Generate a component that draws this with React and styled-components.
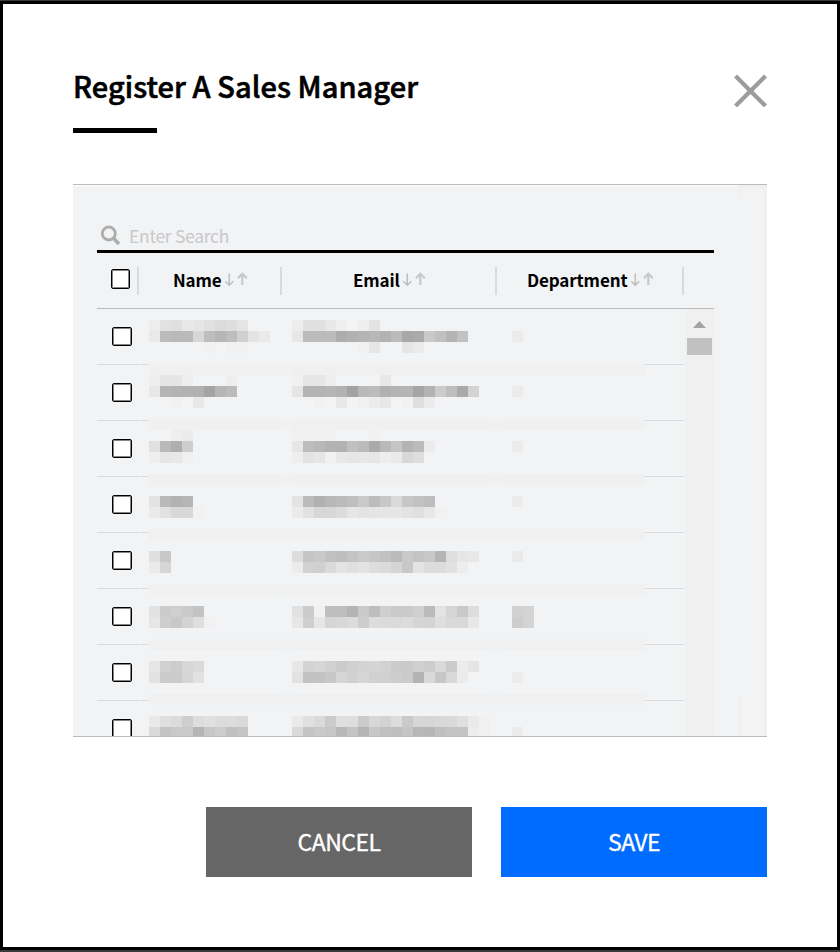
import React from 'react';
import styled, { createGlobalStyle } from 'styled-components';

const GlobalStyle = createGlobalStyle`
  *, *::before, *::after { box-sizing: border-box; }
  body {
    margin: 0;
    background: #fff;
    font-family: "Noto Sans CJK KR", "Noto Sans", sans-serif;
    color: #000;
  }
`;

const Frame = styled.div`
  width: 840px;
  height: 952px;
  border-top: 1px solid #3a3a3a;
  border-bottom: 2px solid #3a3a3a;
`;

const Dialog = styled.main`
  height: 949px;
  border: 3px solid #000;
  background: #fff;
  padding: 70px 70px 0;
  display: flex;
  flex-direction: column;
`;

const Header = styled.header`
  display: flex;
  justify-content: space-between;
  align-items: flex-start;
  height: 54px;
`;

const Title = styled.h1`
  margin: -10px 0 0;
  font-size: 29px;
  line-height: 43px;
  font-weight: 500;
  letter-spacing: 0.07px;
  -webkit-text-stroke: 0.6px #000;
  white-space: nowrap;
`;

const CloseButton = styled.button`
  width: 33px;
  height: 33px;
  padding: 0;
  border: 0;
  background: none;
  svg { display: block; }
`;

const TitleBar = styled.div`
  width: 84px;
  height: 5px;
  background: #000;
`;

const Panel = styled.section`
  margin-top: 51px;
  height: 553px;
  border-top: 1px solid #bbb;
  border-bottom: 1px solid #bbb;
  background: #f2f3f5;
  padding: 35px 53px 0 24px;
  position: relative;
  overflow: hidden;
`;

const EdgeMarks = styled.svg`
  position: absolute;
  inset: 0;
`;

const Search = styled.label`
  display: flex;
  align-items: center;
  height: 33px;
  padding: 2px 0 1px 4px;
  gap: 8px;
  border-bottom: 3px solid #000;
  svg { flex: none; }
`;

const SearchInput = styled.input`
  flex: 1;
  min-width: 0;
  height: 24px;
  padding: 0;
  border: 0;
  outline: 0;
  background: none;
  font: 400 17.5px/24px "Noto Sans CJK KR", sans-serif;
  letter-spacing: -0.3px;
  &::placeholder { color: #c8c8c8; opacity: 1; }
`;

const HeadRow = styled.div`
  display: grid;
  grid-template-columns: 42px 143px 215px 187px 30px;
  height: 56px;
  padding-top: 14px;
  border-bottom: 1px solid #b8babc;
`;

const HeadCell = styled.div`
  display: flex;
  align-items: flex-start;
  height: 28px;
  padding-left: ${(p) => p.$indent}px;
  padding-top: ${(p) => p.$top || 0}px;
  border-right: 2px solid #d9dadc;
`;

const HeadLabel = styled.span`
  font-size: 17px;
  line-height: 26px;
  font-weight: 700;
  letter-spacing: -0.12px;
  width: ${(p) => p.$width}px;
  white-space: nowrap;
`;

const SortBox = styled.span`
  flex: none;
  height: 16px;
  margin-top: 5px;
  svg { display: block; }
`;

const Checkbox = styled.span`
  display: block;
  width: ${(p) => p.$w}px;
  height: ${(p) => p.$h}px;
  border: 1px solid #000;
  border-radius: 2px;
  background: #fff;
  box-shadow: inset 0 0 0 1px #858585;
`;

const Body = styled.div`
  position: relative;
  display: flex;
  height: 427px;
  overflow: hidden;
`;

const Rows = styled.div`
  width: 588px;
`;

const Row = styled.div`
  display: grid;
  grid-template-columns: 42px 544px;
  column-gap: 1px;
  height: 56px;
`;

const RowCell = styled.div`
  padding: 18px 0 0 15px;
  border-bottom: 1px solid #d8dadd;
`;

const Scrollbar = styled.div`
  width: 29px;
  background: #f0f0f0;
  padding: 12px 2px 0;
  svg { display: block; margin: 0 auto 10px; }
`;

const Thumb = styled.div`
  height: 17px;
  background: #c1c1c1;
`;

const Mosaic = styled.svg`
  position: absolute;
  left: 52px;
  top: 0;
  pointer-events: none;
`;

const Actions = styled.footer`
  display: flex;
  justify-content: flex-end;
  gap: 29px;
  margin-top: 70px;
`;

const ActionButton = styled.button`
  width: 266px;
  height: 70px;
  padding: 0 0 2px;
  border: 0;
  background: ${(p) => (p.$primary ? '#006cff' : '#666')};
  color: #fff;
  font: 400 23px/68px "Noto Sans CJK KR", sans-serif;
  letter-spacing: -0.5px;
  -webkit-text-stroke: 0.35px #fff;
`;

const COLUMNS = [
  { label: 'Name', indent: 34, width: 51 },
  { label: 'Email', indent: 71, width: 49 },
  { label: 'Department', indent: 30, width: 103 },
];

// Strips of masked values: [grid row, grid column, grey levels in hex]
const STRIPS = [
  [1, 0, 'ed e1 df e8 e5 e0 dc de e4'],
  [2, 0, 'e9 bb b9 ba d7 be b6 bd d0 e4 ea'],
  [3, 0, '-- -- -- -- -- f1 -- f1 f1'],
  [1, 13, 'ed e0 e0 e8 ef -- ee e3'],
  [2, 13, 'e7 bb bb bb ad b1 b4 b7 b2 bb a8 aa c9 c0 b4 c2'],
  [3, 13, '-- -- -- -- -- -- f1 e6 -- -- e5 ea'],
  [2, 33, 'eb'],
  [6, 0, 'ee e5 e5 ed -- -- -- ee'],
  [7, 0, 'e7 b5 b3 b2 b1 a4 b6 bb'],
  [8, 0, '-- -- f1 -- e7'],
  [6, 13, 'f0 e6 e6 ee -- -- -- -- e8'],
  [7, 13, 'e5 b4 b4 b6 b2 a3 b9 bc b1 b4 b5 a5 b3 cc be aa d3'],
  [8, 13, '-- -- f1 -- e7 -- f1 ec e7 -- f1 de eb'],
  [7, 33, 'eb'],
  [11, 0, '-- -- ee eb'],
  [12, 0, 'e0 b9 ae ce'],
  [13, 0, 'ee e6 e8 f0'],
  [11, 13, 'f1 f0 f1 f1 -- -- -- f1'],
  [12, 13, 'e6 bd b8 b3 b2 c0 bb aa b9 c5 b4 bb eb'],
  [13, 13, 'ee e3 e6 f1 e8 e6 e7 e6 ed ea d8 de'],
  [12, 33, 'eb'],
  [17, 0, 'e3 b9 b2 b6'],
  [18, 0, 'ea e1 d8 d8 f1'],
  [17, 13, 'e3 bb b1 b8 bb bf c9 bc c8 da c7 c2 bd'],
  [18, 13, 'eb e1 d7 d7 dc e6 e3 e5 e6 e6 e3 e0 e7 f1'],
  [17, 33, 'eb'],
  [22, 0, 'df c8'],
  [23, 0, 'ea d6'],
  [22, 13, 'dd c5 c9 c1 be c4 ca c6 c1 bb c9 c3 c8 b5 de e6 e8'],
  [23, 13, 'ec d2 d0 da e4 df e3 dd db d5 c8 e3 dc dc e1 ed'],
  [22, 33, 'ea'],
  [27, 0, 'e2 cb cf ca c3'],
  [28, 0, 'e6 ce c8 d3 de f1'],
  [27, 13, 'e1 cb f1 be bd b4 ca be cf c9 ca cf bb e3 d5 c9 dd'],
  [28, 13, 'e7 cf e6 d6 d8 dc cd dd db da dc d5 d4 de d9 d9 e7'],
  [27, 33, 'd1 d3'],
  [28, 33, 'cd d4'],
  [32, 0, 'e6 d1 cd d7 da'],
  [33, 0, 'e2 cb cc d6 e1'],
  [32, 13, 'e7 d3 d6 d1 cb d0 d3 d5 d2 cb ca cf cc d9 cb ec e5'],
  [33, 13, 'e2 c2 c3 c7 d5 d1 d6 d1 d0 cd ca b3 d9 c7 d8 eb'],
  [33, 33, 'ec'],
  [37, 0, 'e9 df db ce dd e0 dc dc d9'],
  [38, 0, 'da c4 c9 c9 b5 c7 cd c1 c5'],
  [37, 13, 'ea e0 da cb df de cb d8 d3 dd ca d7 d6 d8 d9 df ea f0'],
  [38, 13, 'da c4 c9 c6 b8 c4 b4 c7 c0 bf c5 b7 b6 bf c4 c3 ed f0'],
  [38, 33, 'eb'],
];

const CELL = 11;

function SortArrows() {
  return (
    <SortBox>
      <svg width="24" height="16" viewBox="0 0 24 16" fill="none">
        <path d="M5.3 1.5v11.5M1.3 9.2l4 4 4-4" stroke="#bcbdbe" strokeWidth="1.5" />
        <path d="M18.3 13V2.2M13.8 6.2l4.5-4.4 4.5 4.4" stroke="#c6c7c8" strokeWidth="2.1" />
      </svg>
    </SortBox>
  );
}

function MaskedValues() {
  return (
    <Mosaic width="496" height="427" shapeRendering="crispEdges">
      <rect width="496" height="427" fill="#f2f3f5" />
      {[0, 1, 2, 3, 4, 5, 6].map((i) => (
        <g key={i} fill="#f0f0f0">
          <rect x="0" y={55 + i * 55} width="496" height={CELL} />
          <rect x="132" y={55 + i * 55} width={CELL} height={CELL} fill="#f0f1f3" />
          <rect x="341" y={55 + i * 55} width={CELL} height={CELL} fill="#f0f1f3" />
        </g>
      ))}
      {STRIPS.map(([row, col, tones]) =>
        tones.split(' ').map((tone, i) =>
          tone === '--' ? null : (
            <rect
              key={`${row}-${col + i}`}
              x={(col + i) * CELL}
              y={row * CELL}
              width={CELL}
              height={CELL}
              fill={`#${tone}${tone}${tone}`}
            />
          )
        )
      )}
    </Mosaic>
  );
}

export default function App() {
  return (
    <>
      <GlobalStyle />
      <Frame>
        <Dialog>
          <Header>
            <Title>Register A Sales Manager</Title>
            <CloseButton aria-label="Close">
              <svg width="33" height="33" viewBox="0 0 33 33">
                <path d="M1.5 2l30 30M31.5 2l-30 30" stroke="#9c9c9c" strokeWidth="4.2" />
              </svg>
            </CloseButton>
          </Header>
          <TitleBar />
          <Panel>
            <EdgeMarks width="694" height="551" shapeRendering="crispEdges">
              <path d="M0 0h665v1H0z" fill="#fff" />
              <path d="M665 0h29v551h-4V3h-21v11h-4zM665 511h4v40h-4z" fill="#f0f0f0" />
            </EdgeMarks>
            <Search>
              <svg width="20" height="21" viewBox="0 0 20 21" fill="none" stroke="#adadad">
                <circle cx="7.8" cy="8.5" r="6.5" strokeWidth="2.8" />
                <path d="M12.5 13.3l5.4 5.7" strokeWidth="3.6" />
              </svg>
              <SearchInput placeholder="Enter Search" />
            </Search>
            <HeadRow>
              <HeadCell $indent={14} $top={2}>
                <Checkbox $w={19} $h={20} />
              </HeadCell>
              {COLUMNS.map((c) => (
                <HeadCell key={c.label} $indent={c.indent}>
                  <HeadLabel $width={c.width}>{c.label}</HeadLabel>
                  <SortArrows />
                </HeadCell>
              ))}
            </HeadRow>
            <Body>
              <Rows>
                {Array.from({ length: 8 }, (_, i) => (
                  <Row key={i}>
                    <RowCell>
                      <Checkbox $w={20} $h={19} />
                    </RowCell>
                    <RowCell />
                  </Row>
                ))}
              </Rows>
              <Scrollbar>
                <svg width="13" height="7" viewBox="0 0 13 7">
                  <path d="M6.5 0L13 7H0z" fill="#a3a3a3" />
                </svg>
                <Thumb />
              </Scrollbar>
              <MaskedValues />
            </Body>
          </Panel>
          <Actions>
            <ActionButton>CANCEL</ActionButton>
            <ActionButton $primary>SAVE</ActionButton>
          </Actions>
        </Dialog>
      </Frame>
    </>
  );
}
